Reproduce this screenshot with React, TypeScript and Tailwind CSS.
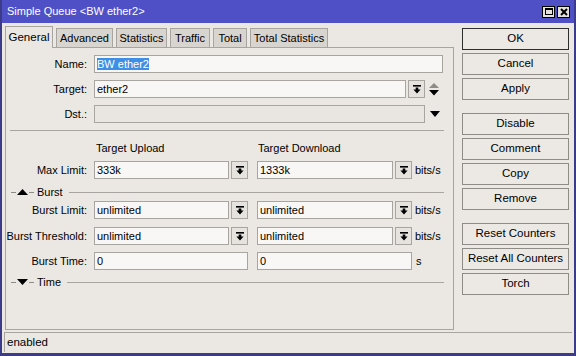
import React from 'react';

const font = "font-['Liberation_Sans',Arial,sans-serif]";

function DropIcon() {
  return (
    <svg width="8" height="9" viewBox="0 0 8 9">
      <rect x="0" y="0" width="8" height="1.6" fill="#000" />
      <path d="M2.7 2.6 H5.3 V4.6 H7.6 L4 8.6 L0.4 4.6 H2.7 Z" fill="#000" />
    </svg>
  );
}

function DropBtn() {
  return (
    <div className="w-[17px] h-[18px] ml-[2px] border border-[#a8a49f] bg-[#e6e3df] flex items-center justify-center">
      <DropIcon />
    </div>
  );
}

function Field({ value, w, sel, disabled }: { value?: string; w: string; sel?: boolean; disabled?: boolean }) {
  return (
    <div
      className={`${w} h-[18px] border border-[#a8a49f] ${disabled ? 'bg-[#e9e6e2]' : 'bg-[#f8f7f5]'} pl-[2px] text-[11px] leading-[16px] text-black whitespace-nowrap overflow-hidden`}
    >
      {sel ? <span className="bg-[#3d8ee6] text-white">{value}</span> : value}
    </div>
  );
}

function Label({ text }: { text: string }) {
  return <div className="w-[83px] pr-[2px] text-right text-[11px] text-black whitespace-nowrap">{text}</div>;
}

function Section({ title, open }: { title: string; open: boolean }) {
  return (
    <div className="flex items-center h-[14px] pl-[5px] pr-[9px]">
      <div className="w-[5px] h-px bg-[#8e8a85]" />
      <svg width="11" height="6" viewBox="0 0 11 6" className="mx-[1px]">
        {open ? <path d="M0 6 L5.5 0 L11 6 Z" fill="#000" /> : <path d="M0 0 L5.5 6 L11 0 Z" fill="#000" />}
      </svg>
      <div className="w-[5px] h-px bg-[#8e8a85]" />
      <span className="ml-[3px] mr-[6px] text-[11px] text-black">{title}</span>
      <div className="flex-1 h-px bg-[#a8a49f]" />
    </div>
  );
}

function Btn({ text, def }: { text: string; def?: boolean }) {
  return (
    <div
      className={`h-[22px] flex items-center justify-center text-[11.5px] text-black bg-[#ece9e5] border ${def ? 'border-[#2e2e2e]' : 'border-[#8f8b86]'}`}
    >
      {text}
    </div>
  );
}

const tabs = [
  { t: 'General', w: 'w-[48px]' },
  { t: 'Advanced', w: 'w-[57px]' },
  { t: 'Statistics', w: 'w-[51px]' },
  { t: 'Traffic', w: 'w-[40px]' },
  { t: 'Total', w: 'w-[34px]' },
  { t: 'Total Statistics', w: 'w-[78px]' },
];

export default function App() {
  return (
    <div className={`${font} w-[576px] h-[356px] flex flex-col bg-[#ebe8e4] border-x-[2px] border-b-[3px] border-[#3b3b8a] overflow-hidden`}>
      {/* Title bar */}
      <div className="h-[23px] shrink-0 bg-[#5050c6] flex items-center pl-[5px] pr-[6px] -mx-[2px]">
        <span className="text-white text-[11px] pl-[2px]">Simple Queue &lt;BW ether2&gt;</span>
        <div className="ml-auto flex gap-[2px]">
          <div className="w-[13px] h-[12px] bg-[#e6e3df] border border-black flex items-center justify-center">
            <div className="w-[8px] h-[7px] border border-black border-t-2" />
          </div>
          <div className="w-[13px] h-[12px] bg-[#e6e3df] border border-black flex items-center justify-center">
            <svg width="8" height="8" viewBox="0 0 8 8">
              <path d="M1 1 L7 7 M7 1 L1 7" stroke="#000" strokeWidth="2" />
            </svg>
          </div>
        </div>
      </div>

      <div className="flex flex-1">
        {/* Left: tabs + panel */}
        <div className="w-[449px] ml-[3px] flex flex-col">
          <div className="flex items-end h-[24px] gap-[3px] pl-[0px]">
            {tabs.map((x, i) =>
              i === 0 ? (
                <div key={x.t} className={`${x.w} h-[22px] border border-b-0 border-[#a8a49f] bg-[#ebe8e4] text-[11.5px] text-black flex items-center justify-center whitespace-nowrap -mb-px relative z-10`}>
                  {x.t}
                </div>
              ) : (
                <div key={x.t} className={`${x.w} h-[19px] border border-b-0 border-[#a8a49f] bg-[#d8d4cf] text-[11px] text-black flex items-center justify-center whitespace-nowrap`}>
                  {x.t}
                </div>
              )
            )}
          </div>
          <div className="h-[283px] border border-[#a8a49f] flex flex-col pt-[7px]">
            <div className="flex items-center">
              <Label text="Name:" />
              <div className="ml-[5px]">
                <Field value="BW ether2" w="w-[349px]" sel />
              </div>
            </div>
            <div className="flex items-center mt-[7px]">
              <Label text="Target:" />
              <div className="ml-[5px] flex">
                <Field value="ether2" w="w-[312px]" />
                <DropBtn />
              </div>
              <svg width="10" height="13" viewBox="0 0 10 13" className="ml-[4px]">
                <path d="M0 5 L5 0 L10 5 Z" fill="#8e8a85" />
                <path d="M0 7 L5 12.5 L10 7 Z" fill="#000" />
              </svg>
            </div>
            <div className="flex items-center mt-[7px]">
              <Label text="Dst.:" />
              <div className="ml-[5px]">
                <Field w="w-[331px]" disabled />
              </div>
              <svg width="10" height="6" viewBox="0 0 10 6" className="ml-[5px]">
                <path d="M0 0 L5 6 L10 0 Z" fill="#000" />
              </svg>
            </div>
            <div className="mt-[7px] mx-[4px] mr-[9px] h-px bg-[#a8a49f]" />

            <div className="flex mt-[9px] h-[14px] text-[11px] text-black">
              <div className="w-[90px]" />
              <div className="w-[162px]">Target Upload</div>
              <div>Target Download</div>
            </div>

            <div className="flex items-center mt-[7px]">
              <Label text="Max Limit:" />
              <div className="ml-[5px] flex">
                <Field value="333k" w="w-[135px]" />
                <DropBtn />
              </div>
              <div className="ml-[9px] flex">
                <Field value="1333k" w="w-[136px]" />
                <DropBtn />
              </div>
              <span className="ml-[3px] text-[11px] text-black">bits/s</span>
            </div>

            <div className="mt-[6px]">
              <Section title="Burst" open />
            </div>

            <div className="flex items-center mt-[2px]">
              <Label text="Burst Limit:" />
              <div className="ml-[5px] flex">
                <Field value="unlimited" w="w-[135px]" />
                <DropBtn />
              </div>
              <div className="ml-[9px] flex">
                <Field value="unlimited" w="w-[136px]" />
                <DropBtn />
              </div>
              <span className="ml-[3px] text-[11px] text-black">bits/s</span>
            </div>
            <div className="flex items-center mt-[8px]">
              <Label text="Burst Threshold:" />
              <div className="ml-[5px] flex">
                <Field value="unlimited" w="w-[135px]" />
                <DropBtn />
              </div>
              <div className="ml-[9px] flex">
                <Field value="unlimited" w="w-[136px]" />
                <DropBtn />
              </div>
              <span className="ml-[3px] text-[11px] text-black">bits/s</span>
            </div>
            <div className="flex items-center mt-[7px]">
              <Label text="Burst Time:" />
              <div className="ml-[5px]">
                <Field value="0" w="w-[154px]" />
              </div>
              <div className="ml-[9px]">
                <Field value="0" w="w-[155px]" />
              </div>
              <span className="ml-[4px] text-[11px] text-black">s</span>
            </div>

            <div className="mt-[5px]">
              <Section title="Time" open={false} />
            </div>
          </div>
        </div>

        {/* Right: buttons */}
        <div className="w-[107px] ml-[8px] mt-[5px] flex flex-col">
          <div className="flex flex-col gap-[3px]">
            <Btn text="OK" def />
            <Btn text="Cancel" />
            <Btn text="Apply" />
          </div>
          <div className="flex flex-col gap-[3px] mt-[13px]">
            <Btn text="Disable" />
            <Btn text="Comment" />
            <Btn text="Copy" />
            <Btn text="Remove" />
          </div>
          <div className="flex flex-col gap-[3px] mt-[13px]">
            <Btn text="Reset Counters" />
            <Btn text="Reset All Counters" />
            <Btn text="Torch" />
          </div>
        </div>
      </div>

      {/* Status bar */}
      <div className="h-[20px] shrink-0 mx-[2px] mb-px border-t border-l border-[#a8a49f] flex items-center pl-[2px] text-[11.5px] text-black">
        enabled
      </div>
    </div>
  );
}
